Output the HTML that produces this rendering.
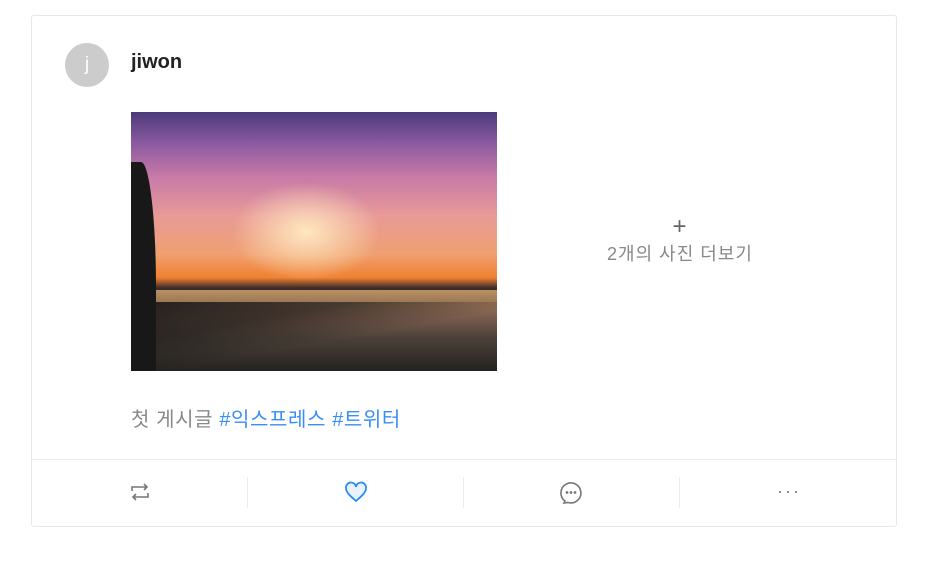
<!DOCTYPE html>
<html><head><meta charset="utf-8"><style>
*{margin:0;padding:0;box-sizing:border-box}
body{width:952px;height:561px;background:#fff;font-family:"Liberation Sans","Noto Sans CJK KR",sans-serif;position:relative;overflow:hidden}
.card{position:absolute;left:31px;top:15px;width:866px;height:512px;border:1px solid #e8e8e8;border-radius:3px}
.av{position:absolute;left:65px;top:43px;width:44px;height:44px;border-radius:50%;background:#ccc;color:#fff;font-size:19px;text-align:center;line-height:44px}
.name{position:absolute;left:131px;top:51px;font-size:20px;font-weight:bold;color:#222}
.img{position:absolute;left:131px;top:112px;width:366px;height:259px;overflow:hidden;
background:linear-gradient(180deg,#4a3a7a 0%,#8a5aa0 12%,#c87aa8 25%,#e89a98 40%,#f0a070 55%,#f08030 64%,#3a2a2a 68%,#5a4030 75%,#2a2520 100%)}
.glow{position:absolute;left:100px;top:70px;width:150px;height:100px;border-radius:50%;background:radial-gradient(#ffe8c0,rgba(255,200,150,0) 70%)}
.field{position:absolute;left:0;top:178px;width:366px;height:81px;background:linear-gradient(180deg,#b89060 0%,#806050 30%,#4a4038 60%,#25221f 100%)}
.tree{position:absolute;left:0;top:50px;width:25px;height:209px;background:#181818;border-radius:0 60% 0 0}
.bank{position:absolute;left:0;top:190px;width:366px;height:69px;background:linear-gradient(170deg,rgba(20,20,20,.9) 0%,rgba(20,20,20,.6) 30%,rgba(0,0,0,0) 55%)}
.more{position:absolute;left:580px;top:214px;width:200px;text-align:center;color:#888;font-size:18px;letter-spacing:1px}
.more .p{font-size:24px;line-height:26px;color:#666;font-weight:300}
.txt{position:absolute;left:131px;top:403px;font-size:20px;color:#888;letter-spacing:.6px}
.txt span{color:#3a8ef5}
.hr{position:absolute;left:31px;top:459px;width:866px;height:1px;background:#ececec}
.sep{position:absolute;top:477px;width:1px;height:31px;background:#ececec}
.ic{position:absolute;top:481px}
</style></head><body>
<div class="card"></div>
<div class="av">j</div>
<div class="name">jiwon</div>
<div class="img"><div class="glow"></div><div class="field"></div><div class="bank"></div><div class="tree"></div></div>
<div class="more"><div class="p">+</div>2개의 사진 더보기</div>
<div class="txt">첫 게시글 <span>#익스프레스 #트위터</span></div>
<div class="hr"></div>
<div class="sep" style="left:247px"></div>
<div class="sep" style="left:463px"></div>
<div class="sep" style="left:679px"></div>
<svg class="ic" style="left:130px" width="20" height="22" viewBox="0 0 20 22" fill="none" stroke="#777" stroke-width="1.6"><path d="M2 10V6h15M14 3l3 3-3 3M18 12v4H3M6 19l-3-3 3-3"/></svg>
<svg class="ic" style="left:344px" width="24" height="22" viewBox="0 0 24 22"><path d="M12 20C5 14 2 11 2 7a5 5 0 0 1 10-1 5 5 0 0 1 10 1c0 4-3 7-10 13z" fill="#e8f3ff" stroke="#2a8cf0" stroke-width="1.8"/></svg>
<svg class="ic" style="left:559px" width="24" height="24" viewBox="0 0 24 24" fill="none" stroke="#777" stroke-width="1.6"><path d="M6 20a10 10 0 1 1 3 1.5L5 22z"/><circle cx="8" cy="11.5" r=".6" fill="#777"/><circle cx="12" cy="11.5" r=".6" fill="#777"/><circle cx="16" cy="11.5" r=".6" fill="#777"/></svg>
<svg class="ic" style="left:778px" width="20" height="22" viewBox="0 0 20 22" fill="#888"><circle cx="2" cy="11" r="1.1"/><circle cx="10" cy="11" r="1.1"/><circle cx="18" cy="11" r="1.1"/></svg>
</body></html>
